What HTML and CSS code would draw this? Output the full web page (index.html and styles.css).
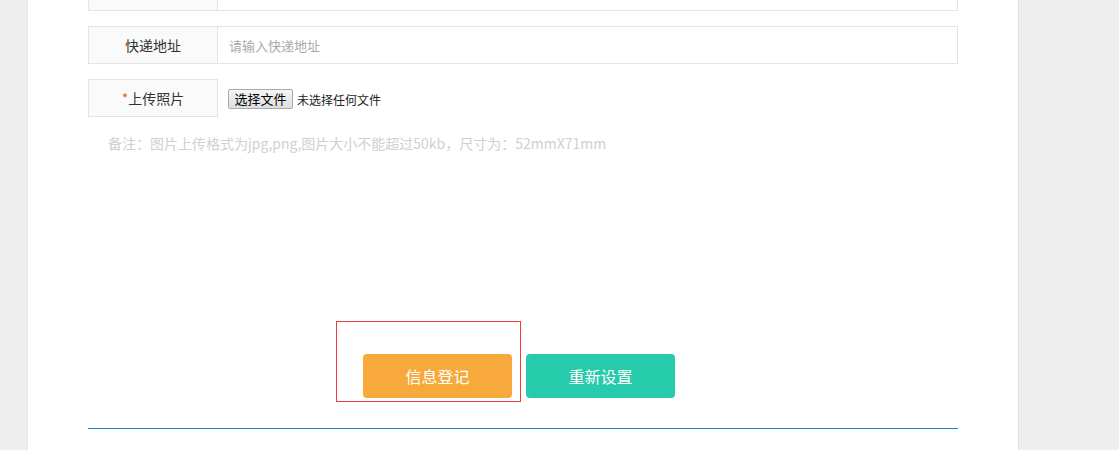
FILE: index.html
```html
<!DOCTYPE html>
<html lang="zh-CN">
<head>
    <meta charset="UTF-8">
    <title>信息登记</title>
    <link rel="stylesheet" href="styles.css">
</head>
<body>
<div class="page">
    <div class="form">
        <div class="row first">
            <div class="label"></div>
            <div class="field"></div>
        </div>
        <div class="row">
            <div class="label">快递地址</div>
            <div class="field"><input type="text" class="text" placeholder="请输入快递地址"></div>
        </div>
        <div class="row bare">
            <div class="label"><span class="star">*</span>上传照片</div>
            <div class="field file">
                <span class="file-btn">选择文件</span>
                <span class="file-name">未选择任何文件</span>
            </div>
        </div>
        <p class="note">备注：图片上传格式为jpg,png,图片大小不能超过50kb，尺寸为：52mmX71mm</p>

        <div class="btns">
            <div class="focus">
                <a class="btn orange" href="#">信息登记</a>
            </div>
            <a class="btn green" href="#">重新设置</a>
        </div>
        <div class="line"></div>
    </div>
</div>
</body>
</html>
```

FILE: styles.css
```css
* {
    padding: 0;
    margin: 0;
    list-style: none;
    border: 0;
    box-sizing: border-box;
}

body {
    background: #eee;
    font-family: "Noto Sans CJK SC", "Liberation Sans", sans-serif;
    font-size: 14px;
    color: #333;
    overflow: hidden;
}

.page {
    display: flow-root;
    width: 992px;
    height: 450px;
    margin-left: 27px;
    background: #fff;
    border-left: 1px solid #e6e6e6;
    border-right: 1px solid #e0e0e0;
}

.form {
    width: 930px;
    padding-left: 60px;
}

.row {
    display: flex;
    width: 870px;
    height: 38px;
    border: 1px solid #e4e4e4;
    margin-bottom: 15px;
}

.row.first {
    margin-top: -27px;
}

.row.bare {
    border: 0;
}

.label {
    width: 129px;
    flex: none;
    background: #fafafa;
    border-right: 1px solid #e4e4e4;
    text-align: center;
    line-height: 36px;
}

.bare .label {
    width: 130px;
    border: 1px solid #e4e4e4;
}

.star {
    color: #e8632c;
}

.field {
    flex: 1;
    display: flex;
    align-items: center;
}

.text {
    width: 100%;
    height: 100%;
    padding-left: 11px;
    font-family: inherit;
    font-size: 13px;
    color: #333;
    outline: none;
    background: transparent;
}

.text::placeholder {
    color: #aaa;
}

.file {
    padding-left: 10px;
    font-size: 12px;
}

.file-btn {
    display: inline-block;
    width: 65px;
    height: 20px;
    line-height: 18px;
    text-align: center;
    font-size: 13px;
    color: #000;
    border: 1px solid #a9a9a9;
    border-radius: 2px;
    background: linear-gradient(#f6f6f6, #dedede);
    margin-right: 4px;
    margin-top: 2px;
}

.file-name {
    color: #222;
    margin-top: 2px;
}

.note {
    margin-top: 16px;
    padding-left: 20px;
    line-height: 20px;
    color: #d0d0d0;
}

.btns {
    display: flex;
    align-items: flex-end;
    margin-top: 168px;
    padding-left: 248px;
}

.focus {
    border: 1px solid #f23a3a;
    padding: 32px 8px 3px 26px;
}

.btn {
    display: block;
    width: 149px;
    height: 44px;
    line-height: 44px;
    border-radius: 4px;
    text-align: center;
    color: #fff;
    font-size: 16px;
    text-decoration: none;
}

.orange {
    background: #f7a93b;
}

.green {
    background: #26cbab;
    margin-left: 5px;
    margin-bottom: 4px;
}

.line {
    width: 870px;
    height: 1px;
    margin-top: 26px;
    background: #1a7ed8;
}
```
